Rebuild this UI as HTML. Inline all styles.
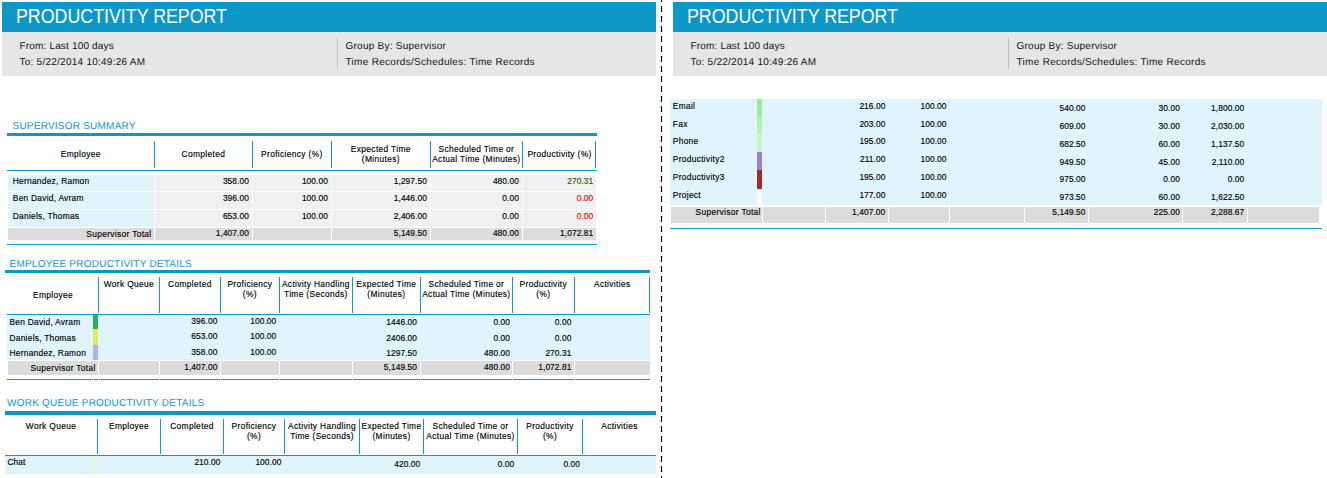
<!DOCTYPE html>
<html><head><meta charset="utf-8"><title>Productivity Report</title>
<style>
html,body{margin:0;padding:0;background:#fff}
body{width:1327px;height:478px;position:relative;overflow:hidden;font-family:"Liberation Sans",sans-serif}
div{position:absolute;white-space:nowrap}
.t{font-size:8.4px;line-height:10px;letter-spacing:.08px;color:#000;-webkit-text-stroke-width:.15px}
.hd{letter-spacing:.35px}
.m{font-size:10px;line-height:12px;letter-spacing:.17px;color:#111;text-rendering:geometricPrecision}
.st{font-size:10px;line-height:11px;letter-spacing:.23px;color:#1192c8;text-rendering:geometricPrecision}
.h1{font-size:20px;line-height:24px;color:#fff;transform-origin:0 50%;transform:scaleX(.89)}
</style></head>
<body>
<div style="left:2px;top:2px;width:654px;height:30px;background:#0d97c9;"></div>
<div style="left:2px;top:32px;width:654px;height:43.6px;background:#e6e6e6;"></div>
<div style="left:337px;top:38px;width:1px;height:31px;background:#bebebe;"></div>
<div class="h1" style="left:15.6px;top:3.7px">PRODUCTIVITY REPORT</div>
<div class="m" style="top:40.83px;left:19.5px;">From: Last 100 days</div>
<div class="m" style="top:56.83px;left:19.5px;letter-spacing:.25px">To: 5/22/2014 10:49:26 AM</div>
<div class="m" style="top:40.83px;left:345.5px;letter-spacing:.25px">Group By: Supervisor</div>
<div class="m" style="top:56.83px;left:345.5px;letter-spacing:.3px">Time Records/Schedules: Time Records</div>
<div style="left:673px;top:2px;width:654px;height:30px;background:#0d97c9;"></div>
<div style="left:673px;top:32px;width:654px;height:43.6px;background:#e6e6e6;"></div>
<div style="left:1008px;top:38px;width:1px;height:31px;background:#bebebe;"></div>
<div class="h1" style="left:686.6px;top:3.7px">PRODUCTIVITY REPORT</div>
<div class="m" style="top:40.83px;left:690.5px;">From: Last 100 days</div>
<div class="m" style="top:56.83px;left:690.5px;letter-spacing:.25px">To: 5/22/2014 10:49:26 AM</div>
<div class="m" style="top:40.83px;left:1016.5px;letter-spacing:.25px">Group By: Supervisor</div>
<div class="m" style="top:56.83px;left:1016.5px;letter-spacing:.3px">Time Records/Schedules: Time Records</div>
<svg style="position:absolute;left:660px;top:0" width="3" height="478"><line x1="1.5" y1="-4" x2="1.5" y2="480" stroke="#000" stroke-width="1.2" stroke-dasharray="6 4"/></svg>
<div class="st" style="left:12.5px;top:121.03px">SUPERVISOR SUMMARY</div>
<div style="left:7px;top:133px;width:590px;height:3px;background:#0d97c9;"></div>
<div style="left:154px;top:141px;width:1.3px;height:27px;background:#1496cc;"></div>
<div style="left:252px;top:141px;width:1.3px;height:27px;background:#1496cc;"></div>
<div style="left:331px;top:141px;width:1.3px;height:27px;background:#1496cc;"></div>
<div style="left:430px;top:141px;width:1.3px;height:27px;background:#1496cc;"></div>
<div style="left:522px;top:141px;width:1.3px;height:27px;background:#1496cc;"></div>
<div style="left:595px;top:141px;width:1.3px;height:27px;background:#1496cc;"></div>
<div style="left:7px;top:170px;width:590px;height:1.2px;background:#1496cc;"></div>
<div class="t hd" style="top:149.49px;left:-69.15px;width:300px;text-align:center;">Employee</div>
<div class="t hd" style="top:149.49px;left:53.35px;width:300px;text-align:center;">Completed</div>
<div class="t hd" style="top:149.49px;left:141.85px;width:300px;text-align:center;">Proficiency (%)</div>
<div class="t hd" style="top:144.09px;left:230.85px;width:300px;text-align:center;">Expected Time</div>
<div class="t hd" style="top:154.09px;left:230.85px;width:300px;text-align:center;">(Minutes)</div>
<div class="t hd" style="top:144.09px;left:326.35px;width:300px;text-align:center;">Scheduled Time or</div>
<div class="t hd" style="top:154.09px;left:326.35px;width:300px;text-align:center;">Actual Time (Minutes)</div>
<div class="t hd" style="top:149.49px;left:409.5px;width:300px;text-align:center;">Productivity (%)</div>
<div style="left:8px;top:175px;width:145.7px;height:15.6px;background:#e0f4fd;"></div>
<div style="left:155px;top:175px;width:96.7px;height:15.6px;background:#eff1f0;"></div>
<div style="left:253px;top:175px;width:77.7px;height:15.6px;background:#eff1f0;"></div>
<div style="left:332px;top:175px;width:97.7px;height:15.6px;background:#eff1f0;"></div>
<div style="left:431px;top:175px;width:90.7px;height:15.6px;background:#eff1f0;"></div>
<div style="left:523px;top:175px;width:73px;height:15.6px;background:#eff1f0;"></div>
<div class="t" style="top:176.09px;left:12.8px;letter-spacing:.25px">Hernandez, Ramon</div>
<div class="t" style="top:176.09px;right:1078.02px;">358.00</div>
<div class="t" style="top:176.09px;right:999.02px;">100.00</div>
<div class="t" style="top:176.09px;right:900.02px;">1,297.50</div>
<div class="t" style="top:176.09px;right:808.02px;">480.00</div>
<div class="t" style="top:176.09px;right:733.72px;color:#3c5a00;">270.31</div>
<div style="left:8px;top:192px;width:145.7px;height:16.6px;background:#e0f4fd;"></div>
<div style="left:155px;top:192px;width:96.7px;height:16.6px;background:#eff1f0;"></div>
<div style="left:253px;top:192px;width:77.7px;height:16.6px;background:#eff1f0;"></div>
<div style="left:332px;top:192px;width:97.7px;height:16.6px;background:#eff1f0;"></div>
<div style="left:431px;top:192px;width:90.7px;height:16.6px;background:#eff1f0;"></div>
<div style="left:523px;top:192px;width:73px;height:16.6px;background:#eff1f0;"></div>
<div class="t" style="top:193.09px;left:12.8px;letter-spacing:.25px">Ben David, Avram</div>
<div class="t" style="top:193.09px;right:1078.02px;">396.00</div>
<div class="t" style="top:193.09px;right:999.02px;">100.00</div>
<div class="t" style="top:193.09px;right:900.02px;">1,446.00</div>
<div class="t" style="top:193.09px;right:808.02px;">0.00</div>
<div class="t" style="top:193.09px;right:733.72px;color:#ff0000;">0.00</div>
<div style="left:8px;top:210px;width:145.7px;height:16.6px;background:#e0f4fd;"></div>
<div style="left:155px;top:210px;width:96.7px;height:16.6px;background:#eff1f0;"></div>
<div style="left:253px;top:210px;width:77.7px;height:16.6px;background:#eff1f0;"></div>
<div style="left:332px;top:210px;width:97.7px;height:16.6px;background:#eff1f0;"></div>
<div style="left:431px;top:210px;width:90.7px;height:16.6px;background:#eff1f0;"></div>
<div style="left:523px;top:210px;width:73px;height:16.6px;background:#eff1f0;"></div>
<div class="t" style="top:211.09px;left:12.8px;letter-spacing:.25px">Daniels, Thomas</div>
<div class="t" style="top:211.09px;right:1078.02px;">653.00</div>
<div class="t" style="top:211.09px;right:999.02px;">100.00</div>
<div class="t" style="top:211.09px;right:900.02px;">2,406.00</div>
<div class="t" style="top:211.09px;right:808.02px;">0.00</div>
<div class="t" style="top:211.09px;right:733.72px;color:#ff0000;">0.00</div>
<div style="left:8px;top:228px;width:145.7px;height:12px;background:#dcdcdc;"></div>
<div style="left:155px;top:228px;width:96.7px;height:12px;background:#dcdcdc;"></div>
<div style="left:253px;top:228px;width:77.7px;height:12px;background:#dcdcdc;"></div>
<div style="left:332px;top:228px;width:97.7px;height:12px;background:#dcdcdc;"></div>
<div style="left:431px;top:228px;width:90.7px;height:12px;background:#dcdcdc;"></div>
<div style="left:523px;top:228px;width:73px;height:12px;background:#dcdcdc;"></div>
<div class="t" style="top:229.09px;right:1175.47px;letter-spacing:.33px">Supervisor Total</div>
<div class="t" style="top:228.09px;right:1078.02px;">1,407.00</div>
<div class="t" style="top:228.09px;right:900.02px;">5,149.50</div>
<div class="t" style="top:228.09px;right:808.02px;">480.00</div>
<div class="t" style="top:228.09px;right:733.72px;">1,072.81</div>
<div style="left:7px;top:244px;width:590px;height:1.2px;background:#1496cc;"></div>
<div class="st" style="left:9.5px;top:259.04px">EMPLOYEE PRODUCTIVITY DETAILS</div>
<div style="left:5px;top:270px;width:645px;height:3px;background:#0d97c9;"></div>
<div style="left:98.2px;top:277px;width:1.3px;height:36px;background:#1496cc;"></div>
<div style="left:159px;top:277px;width:1.3px;height:36px;background:#1496cc;"></div>
<div style="left:220px;top:277px;width:1.3px;height:36px;background:#1496cc;"></div>
<div style="left:279px;top:277px;width:1.3px;height:36px;background:#1496cc;"></div>
<div style="left:352px;top:277px;width:1.3px;height:36px;background:#1496cc;"></div>
<div style="left:420px;top:277px;width:1.3px;height:36px;background:#1496cc;"></div>
<div style="left:512px;top:277px;width:1.3px;height:36px;background:#1496cc;"></div>
<div style="left:574px;top:277px;width:1.3px;height:36px;background:#1496cc;"></div>
<div style="left:649px;top:277px;width:1.3px;height:36px;background:#1496cc;"></div>
<div style="left:7px;top:313.7px;width:643px;height:1.2px;background:#1496cc;"></div>
<div class="t hd" style="top:290.09px;left:-97px;width:300px;text-align:center;">Employee</div>
<div class="t hd" style="top:279.09px;left:-21.15px;width:300px;text-align:center;">Work Queue</div>
<div class="t hd" style="top:279.09px;left:39.85px;width:300px;text-align:center;">Completed</div>
<div class="t hd" style="top:279.09px;left:99.85px;width:300px;text-align:center;">Proficiency</div>
<div class="t hd" style="top:289.09px;left:99.85px;width:300px;text-align:center;">(%)</div>
<div class="t hd" style="top:279.09px;left:165.85px;width:300px;text-align:center;">Activity Handling</div>
<div class="t hd" style="top:289.09px;left:165.85px;width:300px;text-align:center;">Time (Seconds)</div>
<div class="t hd" style="top:279.09px;left:236.35px;width:300px;text-align:center;">Expected Time</div>
<div class="t hd" style="top:289.09px;left:236.35px;width:300px;text-align:center;">(Minutes)</div>
<div class="t hd" style="top:279.09px;left:316.35px;width:300px;text-align:center;">Scheduled Time or</div>
<div class="t hd" style="top:289.09px;left:316.35px;width:300px;text-align:center;">Actual Time (Minutes)</div>
<div class="t hd" style="top:279.09px;left:393.35px;width:300px;text-align:center;">Productivity</div>
<div class="t hd" style="top:289.09px;left:393.35px;width:300px;text-align:center;">(%)</div>
<div class="t hd" style="top:279.09px;left:462.25px;width:300px;text-align:center;">Activities</div>
<div style="left:7px;top:315px;width:643px;height:44.8px;background:#e0f4fd;"></div>
<div style="left:93.4px;top:315px;width:4.8px;height:14px;background:#20b45a;"></div>
<div style="left:93.4px;top:329px;width:4.8px;height:16px;background:#e6e85e;"></div>
<div style="left:93.4px;top:345px;width:4.8px;height:14.8px;background:#b0b0f0;"></div>
<div class="t" style="top:317.09px;left:9.5px;letter-spacing:.25px">Ben David, Avram</div>
<div class="t" style="top:316.09px;right:1109.62px;">396.00</div>
<div class="t" style="top:316.09px;right:1050.72px;">100.00</div>
<div class="t" style="top:317.09px;right:909.92px;">1446.00</div>
<div class="t" style="top:317.09px;right:816.92px;">0.00</div>
<div class="t" style="top:317.09px;right:755.52px;">0.00</div>
<div class="t" style="top:333.09px;left:9.5px;letter-spacing:.25px">Daniels, Thomas</div>
<div class="t" style="top:331.09px;right:1109.62px;">653.00</div>
<div class="t" style="top:331.09px;right:1050.72px;">100.00</div>
<div class="t" style="top:333.09px;right:909.92px;">2406.00</div>
<div class="t" style="top:333.09px;right:816.92px;">0.00</div>
<div class="t" style="top:333.09px;right:755.52px;">0.00</div>
<div class="t" style="top:348.09px;left:9.5px;letter-spacing:.25px">Hernandez, Ramon</div>
<div class="t" style="top:347.09px;right:1109.62px;">358.00</div>
<div class="t" style="top:347.09px;right:1050.72px;">100.00</div>
<div class="t" style="top:348.09px;right:909.92px;">1297.50</div>
<div class="t" style="top:348.09px;right:816.92px;">480.00</div>
<div class="t" style="top:348.09px;right:755.52px;">270.31</div>
<div style="left:8px;top:361.2px;width:90px;height:13.6px;background:#dcdcdc;"></div>
<div style="left:99px;top:361.2px;width:59.7px;height:13.6px;background:#dcdcdc;"></div>
<div style="left:160px;top:361.2px;width:59.7px;height:13.6px;background:#dcdcdc;"></div>
<div style="left:221px;top:361.2px;width:57.7px;height:13.6px;background:#dcdcdc;"></div>
<div style="left:280px;top:361.2px;width:71.7px;height:13.6px;background:#dcdcdc;"></div>
<div style="left:353px;top:361.2px;width:66.7px;height:13.6px;background:#dcdcdc;"></div>
<div style="left:421px;top:361.2px;width:90.7px;height:13.6px;background:#dcdcdc;"></div>
<div style="left:513px;top:361.2px;width:60.7px;height:13.6px;background:#dcdcdc;"></div>
<div style="left:575px;top:361.2px;width:74.5px;height:13.6px;background:#dcdcdc;"></div>
<div class="t" style="top:363.09px;right:1231.37px;letter-spacing:.33px">Supervisor Total</div>
<div class="t" style="top:362.09px;right:1109.62px;">1,407.00</div>
<div class="t" style="top:362.09px;right:909.92px;">5,149.50</div>
<div class="t" style="top:362.09px;right:816.92px;">480.00</div>
<div class="t" style="top:362.09px;right:755.52px;">1,072.81</div>
<div style="left:7px;top:379px;width:85.7px;height:1.3px;background:#1496cc;"></div>
<div style="left:93.7px;top:379px;width:4.3px;height:1.3px;background:#1496cc;"></div>
<div style="left:99px;top:379px;width:59.7px;height:1.3px;background:#1496cc;"></div>
<div style="left:160px;top:379px;width:59.7px;height:1.3px;background:#1496cc;"></div>
<div style="left:221px;top:379px;width:57.7px;height:1.3px;background:#1496cc;"></div>
<div style="left:280px;top:379px;width:71.7px;height:1.3px;background:#1496cc;"></div>
<div style="left:353px;top:379px;width:66.7px;height:1.3px;background:#1496cc;"></div>
<div style="left:421px;top:379px;width:90.7px;height:1.3px;background:#1496cc;"></div>
<div style="left:513px;top:379px;width:60.7px;height:1.3px;background:#1496cc;"></div>
<div style="left:575px;top:379px;width:74.5px;height:1.3px;background:#1496cc;"></div>
<div class="st" style="left:7px;top:398.04px">WORK QUEUE PRODUCTIVITY DETAILS</div>
<div style="left:5px;top:411px;width:651px;height:3.8px;background:#0d97c9;"></div>
<div style="left:97px;top:419px;width:1.3px;height:35px;background:#1496cc;"></div>
<div style="left:160.2px;top:419px;width:1.3px;height:35px;background:#1496cc;"></div>
<div style="left:223px;top:419px;width:1.3px;height:35px;background:#1496cc;"></div>
<div style="left:284.2px;top:419px;width:1.3px;height:35px;background:#1496cc;"></div>
<div style="left:359px;top:419px;width:1.3px;height:35px;background:#1496cc;"></div>
<div style="left:423px;top:419px;width:1.3px;height:35px;background:#1496cc;"></div>
<div style="left:517px;top:419px;width:1.3px;height:35px;background:#1496cc;"></div>
<div style="left:582px;top:419px;width:1.3px;height:35px;background:#1496cc;"></div>
<div style="left:5px;top:454.8px;width:651px;height:1.2px;background:#1496cc;"></div>
<div class="t hd" style="top:421.09px;left:-99px;width:300px;text-align:center;">Work Queue</div>
<div class="t hd" style="top:421.09px;left:-21px;width:300px;text-align:center;">Employee</div>
<div class="t hd" style="top:421.09px;left:42px;width:300px;text-align:center;">Completed</div>
<div class="t hd" style="top:421.09px;left:104px;width:300px;text-align:center;">Proficiency</div>
<div class="t hd" style="top:431.09px;left:104px;width:300px;text-align:center;">(%)</div>
<div class="t hd" style="top:421.09px;left:172px;width:300px;text-align:center;">Activity Handling</div>
<div class="t hd" style="top:431.09px;left:172px;width:300px;text-align:center;">Time (Seconds)</div>
<div class="t hd" style="top:421.09px;left:241.5px;width:300px;text-align:center;">Expected Time</div>
<div class="t hd" style="top:431.09px;left:241.5px;width:300px;text-align:center;">(Minutes)</div>
<div class="t hd" style="top:421.09px;left:320.5px;width:300px;text-align:center;">Scheduled Time or</div>
<div class="t hd" style="top:431.09px;left:320.5px;width:300px;text-align:center;">Actual Time (Minutes)</div>
<div class="t hd" style="top:421.09px;left:400px;width:300px;text-align:center;">Productivity</div>
<div class="t hd" style="top:431.09px;left:400px;width:300px;text-align:center;">(%)</div>
<div class="t hd" style="top:421.09px;left:469.5px;width:300px;text-align:center;">Activities</div>
<div style="left:5px;top:456px;width:651px;height:18px;background:#e0f4fd;"></div>
<div style="left:92px;top:456px;width:5px;height:18px;background:#e0fbd8;"></div>
<div class="t" style="top:457.09px;left:7.4px;">Chat</div>
<div class="t" style="top:457.09px;right:1106.52px;">210.00</div>
<div class="t" style="top:457.09px;right:1045.52px;">100.00</div>
<div class="t" style="top:459.09px;right:906.72px;">420.00</div>
<div class="t" style="top:459.09px;right:812.72px;">0.00</div>
<div class="t" style="top:459.09px;right:746.92px;">0.00</div>
<div style="left:670px;top:99.2px;width:651.7px;height:105.8px;background:#e0f4fd;"></div>
<div style="left:757px;top:99.2px;width:5px;height:17.6px;background:#a0e8a0;"></div>
<div style="left:757px;top:116.8px;width:5px;height:17.6px;background:#b4f2b0;"></div>
<div style="left:757px;top:134.4px;width:5px;height:17.6px;background:#c8f8c8;"></div>
<div style="left:757px;top:152px;width:5px;height:18px;background:#987fd8;"></div>
<div style="left:757px;top:170px;width:5px;height:18.5px;background:#a82828;"></div>
<div style="left:757px;top:188.5px;width:5px;height:16.5px;background:#ffffff;"></div>
<div class="t" style="top:101.09px;left:672.8px;letter-spacing:.3px">Email</div>
<div class="t" style="top:101.09px;right:441.52px;">216.00</div>
<div class="t" style="top:101.09px;right:380.42px;">100.00</div>
<div class="t" style="top:103.09px;right:241.42px;">540.00</div>
<div class="t" style="top:103.09px;right:147.12px;">30.00</div>
<div class="t" style="top:103.09px;right:82.72px;">1,800.00</div>
<div class="t" style="top:119.09px;left:672.8px;letter-spacing:.3px">Fax</div>
<div class="t" style="top:119.09px;right:441.52px;">203.00</div>
<div class="t" style="top:119.09px;right:380.42px;">100.00</div>
<div class="t" style="top:121.09px;right:241.42px;">609.00</div>
<div class="t" style="top:121.09px;right:147.12px;">30.00</div>
<div class="t" style="top:121.09px;right:82.72px;">2,030.00</div>
<div class="t" style="top:136.09px;left:672.8px;letter-spacing:.3px">Phone</div>
<div class="t" style="top:136.09px;right:441.52px;">195.00</div>
<div class="t" style="top:136.09px;right:380.42px;">100.00</div>
<div class="t" style="top:139.09px;right:241.42px;">682.50</div>
<div class="t" style="top:139.09px;right:147.12px;">60.00</div>
<div class="t" style="top:139.09px;right:82.72px;">1,137.50</div>
<div class="t" style="top:154.09px;left:672.8px;letter-spacing:.3px">Productivity2</div>
<div class="t" style="top:154.09px;right:441.52px;">211.00</div>
<div class="t" style="top:154.09px;right:380.42px;">100.00</div>
<div class="t" style="top:157.09px;right:241.42px;">949.50</div>
<div class="t" style="top:157.09px;right:147.12px;">45.00</div>
<div class="t" style="top:157.09px;right:82.72px;">2,110.00</div>
<div class="t" style="top:172.09px;left:672.8px;letter-spacing:.3px">Productivity3</div>
<div class="t" style="top:172.09px;right:441.52px;">195.00</div>
<div class="t" style="top:172.09px;right:380.42px;">100.00</div>
<div class="t" style="top:174.09px;right:241.42px;">975.00</div>
<div class="t" style="top:174.09px;right:147.12px;">0.00</div>
<div class="t" style="top:174.09px;right:82.72px;">0.00</div>
<div class="t" style="top:190.09px;left:672.8px;letter-spacing:.3px">Project</div>
<div class="t" style="top:190.09px;right:441.52px;">177.00</div>
<div class="t" style="top:190.09px;right:380.42px;">100.00</div>
<div class="t" style="top:192.09px;right:241.42px;">973.50</div>
<div class="t" style="top:192.09px;right:147.12px;">60.00</div>
<div class="t" style="top:192.09px;right:82.72px;">1,622.50</div>
<div style="left:671px;top:206.8px;width:91px;height:15.9px;background:#dcdcdc;"></div>
<div style="left:763.1px;top:206.8px;width:62.1px;height:15.9px;background:#dcdcdc;"></div>
<div style="left:826.3px;top:206.8px;width:61.7px;height:15.9px;background:#dcdcdc;"></div>
<div style="left:889.1px;top:206.8px;width:59.9px;height:15.9px;background:#dcdcdc;"></div>
<div style="left:950.1px;top:206.8px;width:73.9px;height:15.9px;background:#dcdcdc;"></div>
<div style="left:1025.1px;top:206.8px;width:62.9px;height:15.9px;background:#dcdcdc;"></div>
<div style="left:1089.1px;top:206.8px;width:92.9px;height:15.9px;background:#dcdcdc;"></div>
<div style="left:1183.1px;top:206.8px;width:63.9px;height:15.9px;background:#dcdcdc;"></div>
<div style="left:1248.1px;top:206.8px;width:71.4px;height:15.9px;background:#dcdcdc;"></div>
<div class="t" style="top:207.09px;right:566.27px;letter-spacing:.33px">Supervisor Total</div>
<div class="t" style="top:207.09px;right:441.72px;">1,407.00</div>
<div class="t" style="top:207.09px;right:241.42px;">5,149.50</div>
<div class="t" style="top:207.09px;right:147.12px;">225.00</div>
<div class="t" style="top:207.09px;right:82.72px;">2,288.67</div>
<div style="left:670.3px;top:228px;width:651.4px;height:1.2px;background:#1496cc;"></div>
</body></html>
